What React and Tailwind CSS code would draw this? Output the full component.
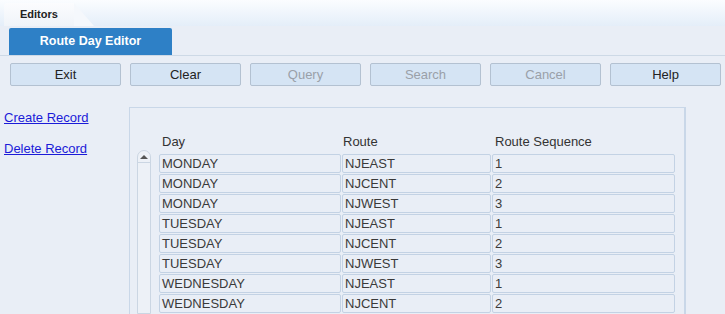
import React from "react";

const rows = [
  ["MONDAY", "NJEAST", "1"],
  ["MONDAY", "NJCENT", "2"],
  ["MONDAY", "NJWEST", "3"],
  ["TUESDAY", "NJEAST", "1"],
  ["TUESDAY", "NJCENT", "2"],
  ["TUESDAY", "NJWEST", "3"],
  ["WEDNESDAY", "NJEAST", "1"],
  ["WEDNESDAY", "NJCENT", "2"],
];

const buttons = [
  { label: "Exit", on: true },
  { label: "Clear", on: true },
  { label: "Query", on: false },
  { label: "Search", on: false },
  { label: "Cancel", on: false },
  { label: "Help", on: true },
];

const Cell = ({ w, children }) => (
  <div
    className={`${w} h-[19px] flex items-center pl-[2px] bg-[#e9eef6] border border-[#c3d2e4] rounded-[2px] text-[13px] text-[#3a3a3a] leading-none`}
  >
    {children}
  </div>
);

export default function App() {
  return (
    <div
      className="w-[725px] h-[314px] overflow-hidden bg-[#e9eef6] flex flex-col"
      style={{ fontFamily: '"Liberation Sans", Arial, sans-serif' }}
    >
      {/* Top strip */}
      <div className="h-[26px] bg-gradient-to-b from-[#fbfdff] to-[#e4eef9] flex items-end pl-[4px]">
        <div className="relative h-[23px] w-[70px] bg-gradient-to-b from-[#fbfcfe] to-[#f0f4f9] rounded-tl-[3px] flex items-center pl-[16px] text-[11px] font-bold text-[#222]">
          Editors
          <div className="absolute right-[-20px] top-0 w-0 h-0 border-l-[20px] border-l-[#f5f8fc] border-t-[23px] border-t-transparent" />
        </div>
      </div>

      {/* Editor tab row */}
      <div className="h-[30px] flex items-end border-b border-[#cdd9e6] pl-[9px]">
        <div className="w-[163px] h-[27px] bg-[#2e80c6] rounded-t-[2px] flex items-center justify-center text-white text-[12.5px] font-bold">
          Route Day Editor
        </div>
      </div>

      {/* Button bar */}
      <div className="flex gap-[9px] pl-[10px] mt-[7px]">
        {buttons.map((b) => (
          <div
            key={b.label}
            className={`w-[111px] h-[23px] flex items-center justify-center bg-[#d5e4f4] border border-[#b3c1d1] rounded-[2px] text-[13px] ${
              b.on ? "text-[#222]" : "text-[#9aa0a8]"
            }`}
          >
            {b.label}
          </div>
        ))}
      </div>

      {/* Body */}
      <div className="flex flex-1 mt-[21px]">
        <div className="w-[129px] flex flex-col gap-[13px] pl-[4px] pt-[2px]">
          <a className="text-[13px] text-[#1b1bd8] underline leading-[18px]" href="#">
            Create Record
          </a>
          <a className="text-[13px] text-[#1b1bd8] underline leading-[18px]" href="#">
            Delete Record
          </a>
        </div>

        <div className="w-[557px] border-t border-l border-r-2 border-[#c9d7e8] bg-[#e9eef6] flex pt-[25px]">
          {/* Scrollbar */}
          <div className="w-[14px] ml-[7px] mt-[17px] border border-[#cbd6e3] rounded-t-[7px] bg-[#edf1f7] flex flex-col items-center">
            <div className="w-full h-[12px] flex items-center justify-center border-b border-[#cbd6e3]">
              <div className="w-0 h-0 border-l-[4px] border-r-[4px] border-b-[4px] border-l-transparent border-r-transparent border-b-[#555]" />
            </div>
          </div>

          <div className="ml-[8px] flex flex-col">
            <div className="flex text-[13px] text-[#333] h-[17px] mb-[4px] items-center">
              <div className="w-[183px] pl-[3px]">Day</div>
              <div className="w-[150px] pl-[1px]">Route</div>
              <div className="w-[184px] pl-[3px]">Route Sequence</div>
            </div>
            <div className="flex flex-col gap-[1px]">
              {rows.map((r, i) => (
                <div key={i} className="flex gap-[1px]">
                  <Cell w="w-[182px]">{r[0]}</Cell>
                  <Cell w="w-[149px]">{r[1]}</Cell>
                  <Cell w="w-[183px]">{r[2]}</Cell>
                </div>
              ))}
            </div>
          </div>
        </div>
      </div>
    </div>
  );
}
